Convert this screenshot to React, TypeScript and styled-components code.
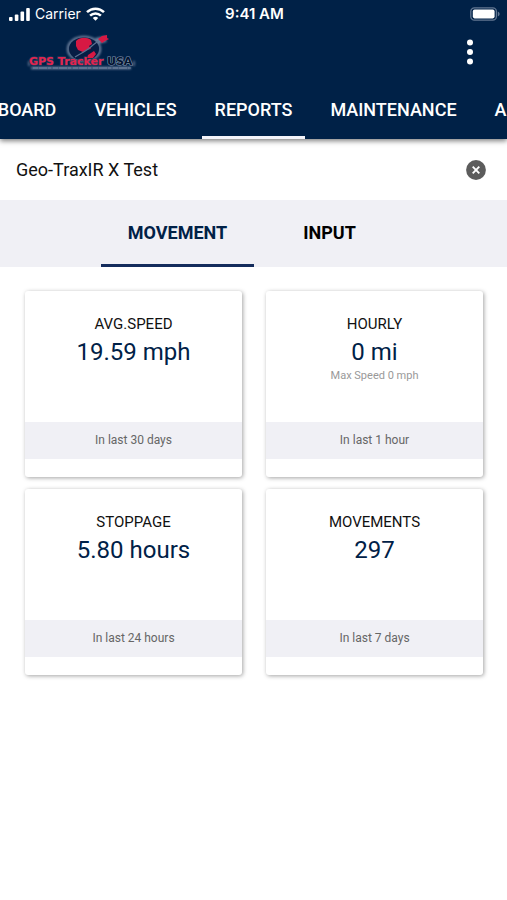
import React, { useState } from "react";
import styled, { createGlobalStyle } from "styled-components";

const navy = "#002147";
const pale = "#f0f0f5";

const GlobalStyle = createGlobalStyle`
  * { box-sizing: border-box; }
  body { margin: 0; background: #fff; font-family: Roboto, sans-serif; color: #111; }
  button, input { font: inherit; color: inherit; border: 0; padding: 0; background: none; }
  button { cursor: pointer; }
`;

const Header = styled.header`
  position: relative;
  background: ${navy};
  color: #fff;
  box-shadow: 0 2px 5px rgba(0, 0, 0, 0.5);
`;

const StatusBar = styled.div`
  display: grid;
  grid-template-columns: 1fr auto 1fr;
  align-items: center;
  height: 28px;
  padding: 0 7px 0 9px;
  font: 500 14px/28px Inter, sans-serif;
`;

const Signal = styled.div`
  display: flex;
  align-items: center;
  gap: 5px;
  font-weight: 400;
`;

const Clock = styled.time`
  font-weight: 600;
  font-size: 15px;
`;

const BatterySlot = styled.div`
  display: flex;
  justify-content: flex-end;
`;

const Toolbar = styled.div`
  display: flex;
  justify-content: space-between;
  align-items: center;
  height: 48px;
  padding: 0 25px 0 24px;
`;

const IconButton = styled.button`
  display: flex;
  align-items: center;
  justify-content: center;
  width: 24px;
  height: 32px;
`;

const Nav = styled.nav`
  display: grid;
  grid-template-columns: minmax(0, 1fr) auto minmax(0, 1fr);
  gap: 12px;
  height: 63px;
  overflow: hidden;
`;

const NavGroup = styled.div<{ $side: "start" | "end" }>`
  display: flex;
  gap: 12px;
  justify-content: flex-${(p) => p.$side};
`;

const NavTab = styled.button<{ $active?: boolean }>`
  flex: none;
  padding: 6px 13px 0;
  border-bottom: 3px solid ${(p) => (p.$active ? "#f4f4fa" : "transparent")};
  font-size: 18px;
  font-weight: 500;
`;

const VehicleField = styled.div`
  display: flex;
  align-items: center;
  height: 61px;
  padding: 0 19px 0 16px;
`;

const VehicleInput = styled.input`
  flex: 1;
  min-width: 0;
  height: 32px;
  outline: 0;
  font-size: 18px;
`;

const SubTabs = styled.div`
  display: flex;
  justify-content: center;
  height: 67px;
  background: ${pale};
`;

const SubTab = styled.button<{ $active: boolean }>`
  width: 30%;
  border-bottom: 3px solid ${(p) => (p.$active ? "#142c5c" : "transparent")};
  color: ${(p) => (p.$active ? navy : "#000")};
  font-size: 18px;
  font-weight: 700;
`;

const Cards = styled.main`
  display: grid;
  grid-template-columns: 1fr 1fr;
  gap: 12px 24px;
  padding: 24px 24px 24px 25px;
`;

const Card = styled.article`
  display: flex;
  flex-direction: column;
  padding-bottom: 18px;
  border-radius: 3px;
  background: #fff;
  box-shadow: 1px 1px 4px rgba(0, 0, 0, 0.36);
  text-align: center;
`;

const CardBody = styled.div`
  min-height: 131px;
  padding-top: 23px;
`;

const CardTitle = styled.h2`
  margin: 0;
  font-size: 15px;
  line-height: 20px;
  font-weight: 400;
`;

const CardValue = styled.p`
  margin: 0;
  color: ${navy};
  font-size: 24px;
  line-height: 36px;
`;

const CardNote = styled.p`
  margin: 0;
  color: #999;
  font-size: 11px;
  line-height: 12px;
`;

const CardPeriod = styled.footer`
  background: ${pale};
  color: #666;
  font-size: 12px;
  line-height: 37px;
`;

const SignalIcon = () => (
  <svg width="21" height="13" viewBox="0 0 21 13" fill="#fff" aria-hidden="true">
    <rect x="0" y="9" width="3.6" height="4" rx="1" />
    <rect x="5.8" y="6.5" width="3.6" height="6.5" rx="1" />
    <rect x="11.5" y="3.5" width="3.6" height="9.5" rx="1" />
    <rect x="17.2" y="0" width="3.6" height="13" rx="1" />
  </svg>
);

const WifiIcon = () => (
  <svg width="19" height="14" viewBox="0 0 19 14" fill="none" stroke="#fff" strokeWidth="2.5" aria-hidden="true">
    <path d="M1 5.2a12.2 12.2 0 0 1 17 0" />
    <path d="M4.1 8.6a7.7 7.7 0 0 1 10.8 0" />
    <path d="M9.5 13.8 6.8 11a3.9 3.9 0 0 1 5.4 0z" fill="#fff" stroke="none" />
  </svg>
);

const BatteryIcon = () => (
  <svg width="30" height="14" viewBox="0 0 30 14" aria-hidden="true">
    <rect x="0.8" y="0.8" width="25.6" height="12.4" rx="3.6" fill="none" stroke="#617691" strokeWidth="1.3" />
    <rect x="2.8" y="2.6" width="21.8" height="8.8" rx="1.8" fill="#fff" />
    <path d="M27.8 4.6c2.4.8 2.4 4 0 4.8z" fill="#617691" />
  </svg>
);

const MoreIcon = () => (
  <svg width="6" height="26" viewBox="0 0 6 26" fill="#fff" aria-hidden="true">
    <circle cx="3" cy="3.4" r="3" />
    <circle cx="3" cy="13" r="3" />
    <circle cx="3" cy="22.6" r="3" />
  </svg>
);

const ClearIcon = () => (
  <svg width="20" height="20" viewBox="0 0 20 20" aria-hidden="true">
    <circle cx="10" cy="10" r="9.9" fill="#5c5c5c" />
    <path d="M6.7 6.7l6.6 6.6M13.3 6.7l-6.6 6.6" stroke="#fff" strokeWidth="1.9" />
  </svg>
);

const Logo = () => (
  <svg width="116" height="42" viewBox="0 0 116 42" role="img" aria-label="GPS Tracker USA">
    <defs>
      <filter id="halo" x="-10%" y="-20%" width="120%" height="140%">
        <feGaussianBlur stdDeviation="1" />
      </filter>
    </defs>
    <g filter="url(#halo)" fill="none" stroke="#8797b2" opacity="0.8">
      <ellipse cx="60" cy="18" rx="16" ry="12" strokeWidth="2.5" />
      <path d="M72 10 82 8" strokeWidth="6" />
      <path d="M7 37h100" strokeWidth="2.5" />
      <path d="M5 30v5M110 30v5" strokeWidth="1.5" />
    </g>
    <ellipse cx="60" cy="18" rx="15" ry="11.5" fill="#061d44" />
    <path d="M52 10c4-4 11-4 15-1l1 4-3 2 2 3-5 1-3 2-5-2-2-4z" fill="#d71943" />
    <path d="M64 24l6-4 2 3-3 4h-6z" fill="#d71943" />
    <path d="M51 26c6-4 12-6 18-12l8-6" fill="none" stroke="#5d7293" strokeWidth="1.1" />
    <path d="M74 8l4-3 5-1v3l2 1-4 2-3 2-2-2z" fill="#d71943" />
    <g fontFamily="DejaVu Sans, sans-serif" fontWeight="700" fontSize="11" strokeWidth="1.2" paintOrder="stroke">
      <text x="5" y="34" fill="#e4234f" stroke="#33405f">GPS Tracker</text>
      <text x="83" y="34" fill="#04142f" stroke="#8496b1">USA</text>
    </g>
    <path d="M9 37h98" stroke="#8e9db5" strokeWidth="1.2" strokeDasharray="5 1 8 1 3 2" opacity="0.6" />
  </svg>
);

const reports = [
  { title: "AVG.SPEED", value: "19.59 mph", period: "In last 30 days" },
  { title: "HOURLY", value: "0 mi", note: "Max Speed 0 mph", period: "In last 1 hour" },
  { title: "STOPPAGE", value: "5.80 hours", period: "In last 24 hours" },
  { title: "MOVEMENTS", value: "297", period: "In last 7 days" },
];

export default function App() {
  const [vehicle, setVehicle] = useState("Geo-TraxIR X Test");
  const [tab, setTab] = useState("MOVEMENT");

  return (
    <>
      <GlobalStyle />
      <Header>
        <StatusBar>
          <Signal>
            <SignalIcon />
            Carrier
            <WifiIcon />
          </Signal>
          <Clock>9:41 AM</Clock>
          <BatterySlot>
            <BatteryIcon />
          </BatterySlot>
        </StatusBar>
        <Toolbar>
          <Logo />
          <IconButton aria-label="More options">
            <MoreIcon />
          </IconButton>
        </Toolbar>
        <Nav>
          <NavGroup $side="end">
            <NavTab>DASHBOARD</NavTab>
            <NavTab>VEHICLES</NavTab>
          </NavGroup>
          <NavTab $active aria-current="page">REPORTS</NavTab>
          <NavGroup $side="start">
            <NavTab>MAINTENANCE</NavTab>
            <NavTab>ALERTS</NavTab>
          </NavGroup>
        </Nav>
      </Header>
      <VehicleField>
        <VehicleInput aria-label="Vehicle" value={vehicle} onChange={(e) => setVehicle(e.target.value)} />
        <IconButton aria-label="Clear vehicle" onClick={() => setVehicle("")}>
          <ClearIcon />
        </IconButton>
      </VehicleField>
      <SubTabs role="tablist">
        {["MOVEMENT", "INPUT"].map((name) => (
          <SubTab key={name} role="tab" aria-selected={tab === name} $active={tab === name} onClick={() => setTab(name)}>
            {name}
          </SubTab>
        ))}
      </SubTabs>
      <Cards>
        {reports.map((r) => (
          <Card key={r.title}>
            <CardBody>
              <CardTitle>{r.title}</CardTitle>
              <CardValue>{r.value}</CardValue>
              {r.note && <CardNote>{r.note}</CardNote>}
            </CardBody>
            <CardPeriod>{r.period}</CardPeriod>
          </Card>
        ))}
      </Cards>
    </>
  );
}
